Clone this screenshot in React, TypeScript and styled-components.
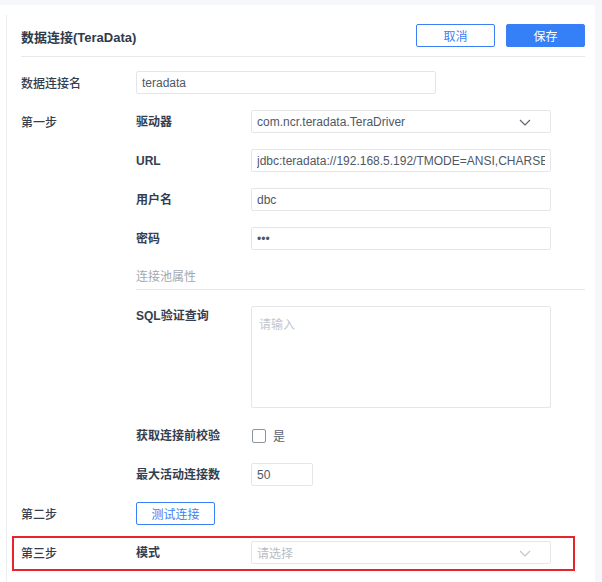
import styled, { createGlobalStyle } from "styled-components";

const GlobalStyle = createGlobalStyle`
  html, body {
    margin: 0;
    padding: 0;
    background-color: #f5f7fa;
    background-image: radial-gradient(#e6e9ef 0.6px, transparent 0.6px);
    background-size: 6px 6px;
    font-family: "Liberation Sans", "Noto Sans CJK SC", sans-serif;
  }
  * {
    box-sizing: border-box;
  }
`;

const Chevron = ({ light }: { light?: boolean }) => (
  <svg width="14" height="14" viewBox="0 0 14 14">
    <polyline
      points="2,5 7,10 12,5"
      fill="none"
      stroke={light ? "#c3c7ce" : "#5b6370"}
      strokeWidth="1.2"
    />
  </svg>
);

function App() {
  return (
    <>
      <GlobalStyle />
      <Panel>
        <Inner>
          <Header>
            <Title>数据连接(TeraData)</Title>
            <Actions>
              <Button>取消</Button>
              <Button primary>保存</Button>
            </Actions>
          </Header>

          <Body>
            <Row>
              <StepLabel>数据连接名</StepLabel>
              <Input defaultValue="teradata" />
            </Row>

            <Step>
              <StepLabel>第一步</StepLabel>
              <Fields>
                <Row>
                  <FieldLabel>驱动器</FieldLabel>
                  <Select>
                    <span>com.ncr.teradata.TeraDriver</span>
                    <Chevron />
                  </Select>
                </Row>
                <Row>
                  <FieldLabel>URL</FieldLabel>
                  <Input defaultValue="jdbc:teradata://192.168.5.192/TMODE=ANSI,CHARSET=UTF8" />
                </Row>
                <Row>
                  <FieldLabel>用户名</FieldLabel>
                  <Input defaultValue="dbc" />
                </Row>
                <Row>
                  <FieldLabel>密码</FieldLabel>
                  <Input type="password" defaultValue="dbc" />
                </Row>
                <SubHeading>连接池属性</SubHeading>
                <Row top>
                  <FieldLabel>SQL验证查询</FieldLabel>
                  <TextArea placeholder="请输入" />
                </Row>
                <Row>
                  <FieldLabel>获取连接前校验</FieldLabel>
                  <CheckLabel>
                    <CheckBox />
                    是
                  </CheckLabel>
                </Row>
                <Row>
                  <FieldLabel>最大活动连接数</FieldLabel>
                  <Input small defaultValue="50" />
                </Row>
              </Fields>
            </Step>

            <Row>
              <StepLabel>第二步</StepLabel>
              <Button>测试连接</Button>
            </Row>

            <Highlight>
              <Row>
                <StepLabel>第三步</StepLabel>
                <FieldLabel>模式</FieldLabel>
                <Select>
                  <Placeholder>请选择</Placeholder>
                  <Chevron light />
                </Select>
              </Row>
            </Highlight>
          </Body>
        </Inner>
      </Panel>
    </>
  );
}

const Panel = styled.div`
  margin-top: 5px;
  width: 595px;
  min-height: 577px;
  background: #fff;
  padding-top: 10px;
`;

const Inner = styled.div`
  margin-left: 6px;
  border-left: 1px solid #eceef2;
  padding: 0 10px 0 14px;
  min-height: 567px;
`;

const Header = styled.div`
  display: flex;
  justify-content: space-between;
  align-items: center;
  padding: 9px 0;
  border-bottom: 1px solid #e6e8ec;
`;

const Title = styled.div`
  font-size: 13px;
  font-weight: 600;
  color: #2f3a4c;
  padding-top: 1px;
`;

const Actions = styled.div`
  display: flex;
  gap: 11px;
`;

const Button = styled.button<{ primary?: boolean }>`
  width: 79px;
  height: 23px;
  border-radius: 2px;
  border: 1px solid #3a7ff6;
  background: ${(p) => (p.primary ? "#3580f6" : "#fff")};
  color: ${(p) => (p.primary ? "#fff" : "#3a7ff6")};
  font-family: "Noto Sans CJK SC", sans-serif;
  font-size: 12px;
  padding: 0;
  cursor: pointer;
`;

const Body = styled.div`
  display: flex;
  flex-direction: column;
  gap: 16px;
  padding-top: 14px;
`;

const Step = styled.div`
  display: flex;
  align-items: flex-start;
`;

const Fields = styled.div`
  display: flex;
  flex-direction: column;
  gap: 16px;
  flex: 1;
`;

const Row = styled.div<{ top?: boolean }>`
  display: flex;
  align-items: ${(p) => (p.top ? "flex-start" : "center")};
  min-height: 23px;
`;

const StepLabel = styled.div`
  width: 115px;
  flex-shrink: 0;
  height: 23px;
  line-height: 19px;
  padding-top: 4px;
  font-size: 12px;
  font-weight: 500;
  color: #343e4f;
`;

const FieldLabel = styled.div`
  width: 115px;
  flex-shrink: 0;
  line-height: 17px;
  padding-top: 2px;
  font-size: 12px;
  font-weight: 700;
  color: #343e4f;
`;

const controlBox = `
  width: 300px;
  height: 23px;
  border: 1px solid #e4e6ea;
  border-radius: 2px;
  background: #fff;
  font-family: "Liberation Sans", "Noto Sans CJK SC", sans-serif;
  font-size: 12px;
  color: #4f5866;
  padding: 0 5px;
`;

const Input = styled.input<{ small?: boolean }>`
  ${controlBox}
  width: ${(p) => (p.small ? "62px" : "300px")};
  outline: none;
`;

const Select = styled.div`
  ${controlBox}
  display: flex;
  align-items: center;
  justify-content: space-between;
  padding-right: 18px;
`;

const Placeholder = styled.span`
  color: #b9bdc5;
  font-family: "Noto Sans CJK SC", sans-serif;
`;

const SubHeading = styled.div`
  height: 24px;
  line-height: 23px;
  border-bottom: 1px solid #e6e8ec;
  font-size: 12px;
  color: #a3a8b1;
`;

const TextArea = styled.textarea`
  width: 300px;
  height: 102px;
  border: 1px solid #e4e6ea;
  border-radius: 2px;
  padding: 8px 7px;
  resize: none;
  outline: none;
  font-family: "Noto Sans CJK SC", sans-serif;
  font-size: 12px;
  color: #4f5866;
  &::placeholder {
    color: #c2c6cd;
  }
`;

const CheckLabel = styled.label`
  display: flex;
  align-items: center;
  gap: 7px;
  padding-left: 1px;
  font-size: 12px;
  color: #5a6270;
`;

const CheckBox = styled.span`
  display: inline-block;
  width: 14px;
  height: 14px;
  border: 1px solid #8d94a0;
  border-radius: 2px;
  background: #fff;
`;

const Highlight = styled.div`
  margin: -5px 10px 0 -9px;
  border: 2px solid #e8232b;
  padding: 3px 0 5px 7px;
`;

export default App;
